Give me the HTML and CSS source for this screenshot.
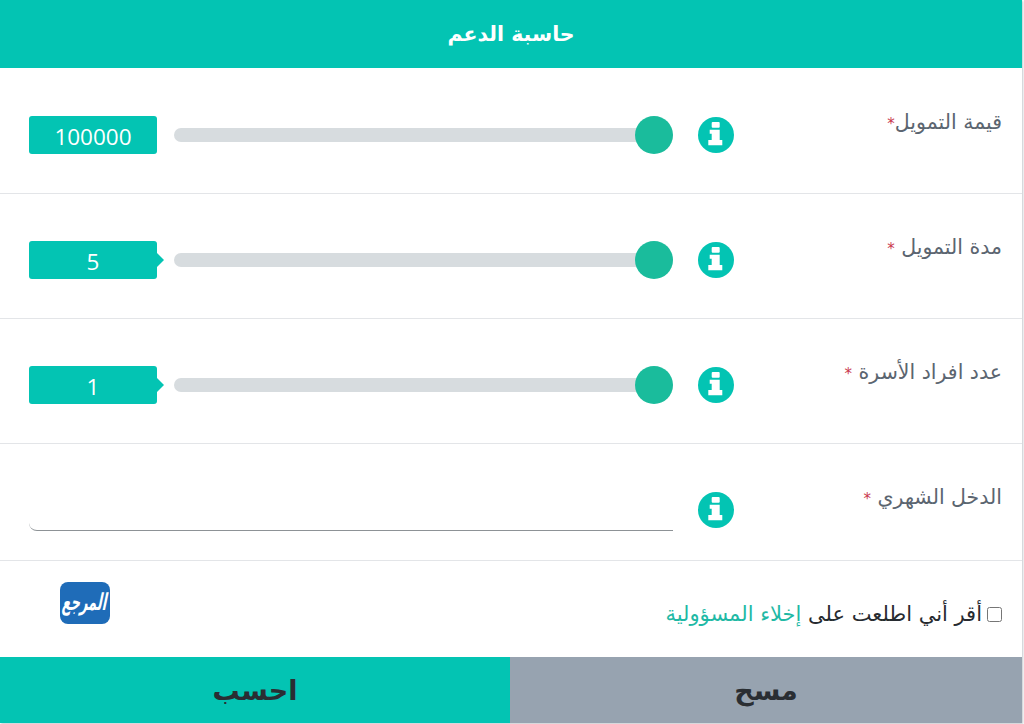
FILE: index.html
```html
<!DOCTYPE html>
<html lang="ar" dir="rtl">
<head>
<meta charset="utf-8">
<title>حاسبة الدعم</title>
<link rel="stylesheet" href="styles.css">
</head>
<body>
<main class="card">
  <header class="title">حاسبة الدعم</header>
  <section class="row">
    <label class="label">قيمة التمويل<span class="req">*</span></label>
    <svg class="info" viewBox="0 0 36 36"><circle cx="18" cy="18" r="18"/><rect class="glyph" x="13.700" y="5" width="8" height="5.700" rx="1"/><path class="glyph" d="M11.700 12.700H21.700V23H24.300V28.300H10.300V23H13.700V16.700H11.700z"/></svg>
    <input class="range" type="range" min="0" max="100" value="100" dir="ltr">
    <output class="bubble">100000</output>
  </section>
  <section class="row">
    <label class="label">مدة التمويل <span class="req">*</span></label>
    <svg class="info" viewBox="0 0 36 36"><circle cx="18" cy="18" r="18"/><rect class="glyph" x="13.700" y="5" width="8" height="5.700" rx="1"/><path class="glyph" d="M11.700 12.700H21.700V23H24.300V28.300H10.300V23H13.700V16.700H11.700z"/></svg>
    <input class="range" type="range" min="0" max="100" value="100" dir="ltr">
    <output class="bubble arrow">5</output>
  </section>
  <section class="row">
    <label class="label">عدد افراد الأسرة <span class="req">*</span></label>
    <svg class="info" viewBox="0 0 36 36"><circle cx="18" cy="18" r="18"/><rect class="glyph" x="13.700" y="5" width="8" height="5.700" rx="1"/><path class="glyph" d="M11.700 12.700H21.700V23H24.300V28.300H10.300V23H13.700V16.700H11.700z"/></svg>
    <input class="range" type="range" min="0" max="100" value="100" dir="ltr">
    <output class="bubble arrow">1</output>
  </section>
  <section class="row row-income">
    <label class="label">الدخل الشهري <span class="req">*</span></label>
    <svg class="info" viewBox="0 0 36 36"><circle cx="18" cy="18" r="18"/><rect class="glyph" x="13.700" y="5" width="8" height="5.700" rx="1"/><path class="glyph" d="M11.700 12.700H21.700V23H24.300V28.300H10.300V23H13.700V16.700H11.700z"/></svg>
    <input class="income" type="text">
  </section>
  <section class="consent">
    <label class="check"><input type="checkbox" class="box"><span>أقر أني اطلعت على <a class="link">إخلاء المسؤولية</a></span></label>
    <div class="logo"><span class="logo-text">المرجع</span></div>
  </section>
  <footer class="actions">
    <button class="btn clear">مسح</button>
    <button class="btn calc">احسب</button>
  </footer>
</main>
</body>
</html>
```

FILE: styles.css
```css
* { box-sizing: border-box; }
html, body { margin: 0; background: #fff; }
body { font-family: "DejaVu Sans", "Noto Sans", sans-serif; height: 724px; overflow: hidden; }
.card {
  width: 1022px;
  height: 723px;
  margin-right: auto;
  display: flex;
  flex-direction: column;
  box-shadow: 1px 1px 2px #c4c8cc;
}
.title {
  height: 68px;
  background: #03c4b3;
  color: #fff;
  font-size: 20.500px;
  font-weight: 700;
  display: flex;
  align-items: center;
  justify-content: center;
  flex: none;
}
.row {
  height: 125px;
  padding: 29px 20px 0 0;
  border-bottom: 1px solid #e3e5e8;
  display: flex;
  align-items: flex-start;
  flex: none;
}
.row:first-of-type { height: 126px; padding-top: 30px; }
.label {
  width: 268px;
  padding-top: 11px;
  font-size: 20.500px;
  line-height: 26px;
  color: #5b6570;
}
.req { color: #c9394d; font-size: 15px; }
.info { width: 36px; height: 36px; margin-top: 19px; flex: none; }
.info circle { fill: #03c4b3; }
.info .glyph { fill: #fff; }
.range {
  -webkit-appearance: none;
  appearance: none;
  width: 499px;
  height: 38px;
  margin: 18px 25px 0 17px;
  background: transparent;
  flex: none;
}
.range::-webkit-slider-runnable-track {
  height: 14px;
  border-radius: 7px;
  background: #d7dcdf;
}
.range::-webkit-slider-thumb {
  -webkit-appearance: none;
  width: 38px;
  height: 38px;
  margin-top: -12px;
  border-radius: 50%;
  background: #1abc9c;
}
.bubble {
  position: relative;
  width: 128px;
  height: 38px;
  margin-top: 18px;
  border-radius: 3px;
  background: #03c4b3;
  color: #fff;
  font-family: "Open Sans", sans-serif;
  font-size: 22.500px;
  line-height: 41px;
  text-align: center;
  flex: none;
}
.arrow::after {
  content: "";
  position: absolute;
  top: 12px;
  right: -7px;
  border-top: 7px solid transparent;
  border-bottom: 7px solid transparent;
  border-left: 7px solid #03c4b3;
}
.row.row-income { height: 117px; }
.income {
  width: 644px;
  height: 58px;
  margin: 0 25px 0 0;
  border: 0;
  border-bottom: 1px solid #8d9296;
  border-radius: 0 0 0 8px;
  outline: 0;
  background: transparent;
  flex: none;
}
.consent {
  height: 96px;
  padding: 21px 20px 0 60px;
  display: flex;
  justify-content: space-between;
  align-items: flex-start;
  flex: none;
}
.check {
  margin-top: 18px;
  display: flex;
  align-items: center;
  gap: 5px;
  font-size: 21px;
  line-height: 28px;
  color: #272b30;
}
.box { width: 15px; height: 15px; margin: 0; }
.link { color: #1fb9a5; }
.logo {
  width: 50px;
  height: 42px;
  border-radius: 8px;
  background: #1f6cb8;
  color: #fff;
  display: flex;
  align-items: center;
  justify-content: center;
}
.logo-text {
  font-size: 13px;
  font-weight: 700;
  line-height: 16px;
  transform: skewX(-12deg) scaleY(1.8);
}
.actions { flex: 1; display: flex; }
.btn {
  flex: 1;
  border: 0;
  padding: 0;
  font-family: inherit;
  font-size: 27px;
  font-weight: 700;
  color: #2a2e33;
}
.clear { background: #97a3b0; }
.btn.calc { flex: 0 0 510px; background: #03c4b3; }
```
